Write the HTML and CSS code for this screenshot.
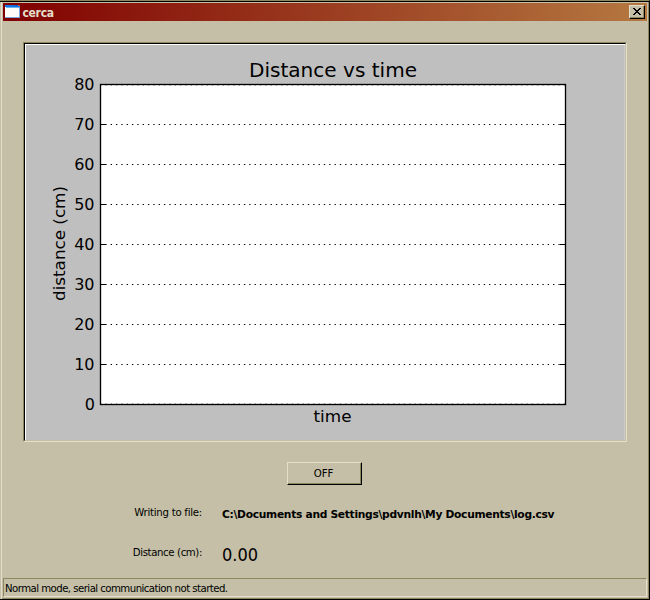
FILE: index.html
```html
<!DOCTYPE html>
<html lang="en">
<head>
<meta charset="utf-8">
<title>cerca</title>
<link rel="stylesheet" href="styles.css">
</head>
<body>
<div class="window">
  <header class="titlebar">
    <svg class="app-icon" width="15" height="13" viewBox="0 0 15 13" shape-rendering="crispEdges">
      <path fill="#fffdf8" d="M0 0h15v13H0z"/>
      <path fill="#1673df" d="M0 0h15v2H0z"/>
      <path fill="#66b4f5" d="M1 2h13v1H1z"/>
      <path fill="#124dab" d="M9 0h1v1h-1zM11 0h1v1h-1z"/>
      <path fill="#d9502e" d="M13 0h2v1h-2z"/>
      <path fill="#78a7d8" d="M14 2h1v11h-1zM0 12h15v1H0z"/>
    </svg>
    <span class="title">cerca</span>
    <button class="close" aria-label="Close">
      <svg width="8" height="7" viewBox="0 0 8 7" shape-rendering="crispEdges">
        <path d="M0 0h2v1H0zM6 0h2v1H6zM1 1h2v1H1zM5 1h2v1H5zM2 2h4v1H2zM3 3h2v1H3zM2 4h4v1H2zM1 5h2v1H1zM5 5h2v1H5zM0 6h2v1H0zM6 6h2v1H6z"/>
      </svg>
    </button>
  </header>
  <main class="content">
    <div class="chart">
      <svg width="600" height="396" viewBox="25 44 600 396">
        <rect x="100" y="84" width="465" height="320" fill="#fff"/>
        <g class="grid">
          <path d="M100 124.5H565M100 164.5H565M100 204.5H565M100 244.5H565M100 284.5H565M100 324.5H565M100 364.5H565"/>
          <path class="edge" d="M100 85.5H565M100 403.5H565"/>
        </g>
        <path class="ticks" d="M101 124.5h5M101 164.5h5M101 204.5h5M101 244.5h5M101 284.5h5M101 324.5h5M101 364.5h5M565 124.5h-5M565 164.5h-5M565 204.5h-5M565 244.5h-5M565 284.5h-5M565 324.5h-5M565 364.5h-5"/>
        <rect class="axes" x="100.5" y="84.5" width="465" height="320"/>
        <text class="heading" x="333" y="77" textLength="168" lengthAdjust="spacingAndGlyphs">Distance vs time</text>
        <g class="values">
          <text x="94.5" y="90">80</text>
          <text x="94.5" y="130">70</text>
          <text x="94.5" y="170">60</text>
          <text x="94.5" y="210">50</text>
          <text x="94.5" y="250">40</text>
          <text x="94.5" y="290">30</text>
          <text x="94.5" y="330">20</text>
          <text x="94.5" y="370">10</text>
          <text x="95" y="410">0</text>
        </g>
        <text class="axis-name" x="332.5" y="422" textLength="38" lengthAdjust="spacingAndGlyphs">time</text>
        <text class="axis-name" transform="translate(65 243.5) rotate(-90)" textLength="115" lengthAdjust="spacingAndGlyphs">distance (cm)</text>
      </svg>
    </div>
    <button class="toggle"><span>OFF</span></button>
    <div class="readings">
      <span class="label file-label">Writing to file:</span>
      <span class="path">C:\Documents and Settings\pdvnlh\My Documents\log.csv</span>
      <span class="label distance-label">Distance (cm):</span>
      <span class="distance">0.00</span>
    </div>
  </main>
  <footer class="status"><span>Normal mode, serial communication not started.</span></footer>
</div>
</body>
</html>
```
FILE: styles.css
```css
* { box-sizing: border-box; }
body { margin: 0; background: #c4bfa6; }
button { padding: 0; border-radius: 0; color: #000; background: #c4bfa6; }
.window {
  display: flex;
  flex-direction: column;
  width: 650px;
  height: 600px;
  padding: 1px 1px 1px 2px;
  overflow: hidden;
  background: #c4bfa6;
  border-top: 1px solid #8c8760;
  border-right: 1px solid #000;
  border-bottom: 1px solid #000;
  box-shadow: inset 0 1px #000, inset 1px 0 #c4bfa6, inset 2px 0 #e4dfcb, inset -1px -1px #8c8760;
  font: 11px/14px "DejaVu Sans Condensed", "DejaVu Sans", sans-serif;
  color: #000;
}
.titlebar {
  display: flex;
  align-items: center;
  height: 18px;
  margin: 1px 1px 0;
  padding: 0 2px;
  background: linear-gradient(90deg, #800000, #b57840);
}
.app-icon { margin-top: -1px; }
.title {
  margin: 2px 0 0 2.5px;
  color: #e4dfcb;
  font: bold 12px/18px "DejaVu Sans Condensed", sans-serif;
  letter-spacing: -0.3px;
}
.close {
  display: flex;
  justify-content: center;
  align-items: center;
  width: 16px;
  height: 14px;
  margin-left: auto;
  border: 1px solid;
  border-color: #e4dfcb #000 #000 #e4dfcb;
  box-shadow: inset -1px -1px #8c8760;
}
.close svg { margin: -1px 0 0; }
.content {
  display: flex;
  flex-direction: column;
  flex: 1;
  padding: 21px 0 0 21px;
}
.chart {
  width: 604px;
  height: 400px;
  border: 1px solid;
  border-color: #8c8760 #e4dfcb #e4dfcb #8c8760;
}
.chart svg {
  display: block;
  width: 602px;
  height: 398px;
  padding: 0;
  border: 1px solid;
  border-color: #000 #c4bfa6 #c4bfa6 #000;
  background: #bfbfbf;
  box-shadow: inset 1px 1px #fff, inset -1px 0 #cbcbcb;
}
.chart text { font-family: "DejaVu Sans", sans-serif; font-size: 16px; }
.chart .heading { font-size: 19.7px; text-anchor: middle; }
.values { text-anchor: end; }
.chart .axis-name { font-size: 16.4px; text-anchor: middle; }
.grid { stroke: #000; stroke-width: 1.2; stroke-dasharray: 1.33 4; fill: none; }
.edge { stroke-opacity: 0.3; }
.ticks { stroke: #000; stroke-width: 1; }
.axes { stroke: #000; stroke-width: 1.33; fill: none; }
.toggle {
  width: 75px;
  height: 23px;
  margin: 20px 0 0 264px;
  border: 1px solid;
  border-color: #e4dfcb #000 #000 #e4dfcb;
  box-shadow: inset -1px -1px #8c8760;
  font: 11.3px/14px "DejaVu Sans Condensed", sans-serif;
}
.toggle span { margin-right: 2px; }
.readings {
  display: grid;
  grid-template-columns: 179px 1fr;
  grid-template-rows: 40px 40px;
  column-gap: 20px;
  margin-top: 11px;
  align-items: center;
  white-space: nowrap;
}
.label { justify-self: end; margin-top: -7px; font-size: 11.3px; }
.file-label { letter-spacing: -0.25px; }
.distance-label { letter-spacing: -0.38px; }
.path {
  margin-top: -2px;
  font-family: "DejaVu Sans", sans-serif;
  font-size: 10.7px;
  font-weight: bold;
  letter-spacing: -0.3px;
}
.distance { margin-top: -2px; font-size: 18px; }
.status {
  height: 19px;
  margin: 0 1px 1px;
  padding: 2px 1px;
  border: 1px solid;
  border-color: #8c8760 #e4dfcb #e4dfcb #8c8760;
  font-size: 11.3px;
  line-height: 15px;
  letter-spacing: -0.54px;
}
```
